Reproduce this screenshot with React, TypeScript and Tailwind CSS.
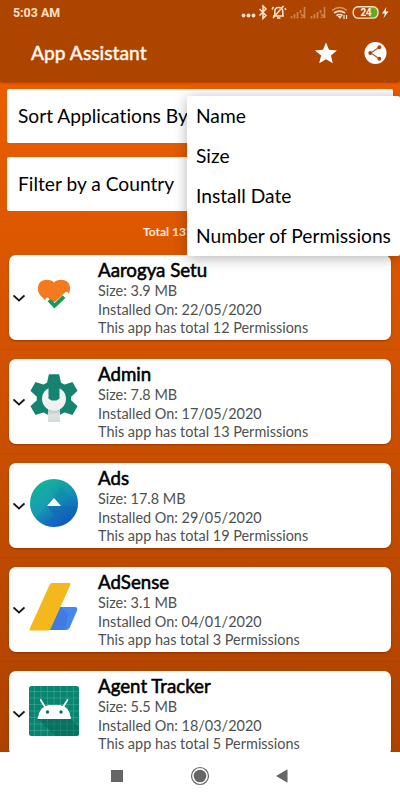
import React from "react";

type AppEntry = {
  name: string;
  size: string;
  date: string;
  permissions: number;
  icon: React.ReactNode;
};

const AarogyaIcon = () => (
  <svg viewBox="0 0 50 50" className="h-[50px] w-[50px]">
    <path d="M25 12.500C28 9 36 8.500 39.500 13C42 17 41.500 22 38.500 25L31 32H18L11.500 25.500C8.500 22 8 17 10.500 13C14 8.500 22 9 25 12.500Z" fill="#f47a20" />
    <path d="M18.300 29.500L25 35.200L37.500 23.500V37H16Z" fill="#fff" stroke="#fff" strokeWidth="3.500" strokeLinejoin="round" />
    <path d="M20 30L25.500 35.800L35 26.600" fill="none" stroke="#119b54" strokeWidth="3.800" />
  </svg>
);

const AdminIcon = () => (
  <svg viewBox="0 0 50 50" className="h-[50px] w-[50px]">
    <defs>
      <linearGradient id="handle" x1="0" y1="0" x2="0" y2="1">
        <stop offset="0" stopColor="#aeb4b4" />
        <stop offset="0.5" stopColor="#dfe3e3" />
        <stop offset="1" stopColor="#d5d9d9" />
      </linearGradient>
    </defs>
    <g fill="#15836f" stroke="#15836f" strokeWidth="1.500" strokeLinejoin="round">
      <circle cx="25" cy="24.500" r="16.500" />
      <path d="M20.500 1H29.500L31.500 10H18.500Z" />
      <path d="M20.500 1H29.500L31.500 10H18.500Z" transform="rotate(60 25 24.500)" />
      <path d="M20.500 1H29.500L31.500 10H18.500Z" transform="rotate(120 25 24.500)" />
      <path d="M20.500 1H29.500L31.500 10H18.500Z" transform="rotate(240 25 24.500)" />
      <path d="M20.500 1H29.500L31.500 10H18.500Z" transform="rotate(300 25 24.500)" />
    </g>
    <path d="M19 34H31V48H19Z" fill="url(#handle)" />
    <path d="M19.500 14.200A12 12 0 1 0 30.500 14.200V24.500L27.500 26.500H22.500L19.500 24.500Z" fill="#f0f2f2" />
  </svg>
);

const AdsIcon = () => (
  <svg viewBox="0 0 50 50" className="h-[50px] w-[50px]">
    <defs>
      <linearGradient id="ads-fill" x1="0.25" y1="0.1" x2="0.8" y2="0.95">
        <stop offset="0" stopColor="#12b39b" />
        <stop offset="0.5" stopColor="#168fb3" />
        <stop offset="1" stopColor="#104bc8" />
      </linearGradient>
      <clipPath id="ads-clip"><circle cx="25" cy="25" r="24" /></clipPath>
    </defs>
    <g clipPath="url(#ads-clip)">
      <rect width="50" height="50" fill="url(#ads-fill)" />
      <path d="M32 9L50 27V50L25 19Z" fill="#087eac" opacity="0.3" />
      <path d="M18 28H50V44L30 44Z" fill="#1063b2" opacity="0.5" />
      <path d="M0 26L19 8L25 18L5 42Z" fill="#22aeb0" opacity="0.3" />
      <path d="M23 39L30 44L25 50H14Z" fill="#1266cf" opacity="0.5" />
    </g>
    <path d="M25 20L32 28H18Z" fill="#fff" />
  </svg>
);

const AdSenseIcon = () => (
  <svg viewBox="0 0 50 50" className="h-[50px] w-[50px]">
    <path d="M30 25H46Q49 25 48 28.500L40.500 46Q39.500 48 37 48H19Z" fill="#4587ed" />
    <path d="M32 25L39 33L36 48H20Z" fill="#3f7be2" />
    <path d="M23 1H40.500Q42 1 41.200 3L22 46Q21 48.500 19 48.500H1.500Q0 48.500 1 46L20.500 3Q21.500 1 23 1Z" fill="#f4b81d" />
  </svg>
);

const TrackerIcon = () => (
  <svg viewBox="0 0 50 50" className="h-[50px] w-[50px]">
    <defs>
      <clipPath id="tracker-clip"><rect width="50" height="50" rx="2.500" /></clipPath>
    </defs>
    <g clipPath="url(#tracker-clip)">
      <rect width="50" height="50" fill="#07856f" />
      <path d="M5.500 0V50M12 0V50M18.500 0V50M25 0V50M31.500 0V50M38 0V50M44.500 0V50M0 5.500H50M0 12H50M0 18.500H50M0 25H50M0 31.500H50M0 38H50M0 44.500H50" stroke="#48a797" strokeWidth="0.600" />
      <path d="M9 33L26 50H50V41L41 32Z" fill="#075e50" opacity="0.45" />
    </g>
    <path d="M8.500 33Q10 20.500 20 19H31Q41 20.500 42 33Z" fill="#fff" />
    <path d="M16 21L11.700 14M34 21L38.500 14" stroke="#fff" strokeWidth="1.700" strokeLinecap="round" />
    <circle cx="18.500" cy="26" r="1.700" fill="#08745f" />
    <circle cx="32" cy="26" r="1.700" fill="#08745f" />
  </svg>
);

const apps: AppEntry[] = [
  { name: "Aarogya Setu", size: "3.9 MB", date: "22/05/2020", permissions: 12, icon: <AarogyaIcon /> },
  { name: "Admin", size: "7.8 MB", date: "17/05/2020", permissions: 13, icon: <AdminIcon /> },
  { name: "Ads", size: "17.8 MB", date: "29/05/2020", permissions: 19, icon: <AdsIcon /> },
  { name: "AdSense", size: "3.1 MB", date: "04/01/2020", permissions: 3, icon: <AdSenseIcon /> },
  { name: "Agent Tracker", size: "5.5 MB", date: "18/03/2020", permissions: 5, icon: <TrackerIcon /> },
];

const StatusIcons = () => (
  <svg viewBox="0 0 150 22" className="h-[22px] w-[150px]" fill="none" stroke="#ffe4cd">
    <g fill="#ffe4cd" stroke="none">
      <circle cx="4.500" cy="13.500" r="1.900" />
      <circle cx="9.500" cy="13.500" r="1.900" />
      <circle cx="14.500" cy="13.500" r="1.900" />
    </g>
    <path d="M20.500 7L27 13.500L24 16.500V4L27 7L20.500 13.500" strokeWidth="1.500" />
    <path d="M34 14H45M35.800 14V9.500Q35.800 5.500 39.800 5.500Q43.800 5.500 43.800 9.500V13.500M38 16H41.500M44.500 4L34 16M34.500 5L33 7.500M46 6L46.800 8" strokeWidth="1.500" />
    <g opacity="0.4">
      <path d="M52.500 14V16.500M55.500 12V16.500M58.500 10V16.500M61.500 8V11M65.500 5V16M62 12L66 16M66 12L62 16" strokeWidth="1.700" />
      <path d="M72.500 14V16.500M75.500 12V16.500M78.500 10V16.500M81.500 8V11M85.500 5V16M82 12L86 16M86 12L82 16" strokeWidth="1.700" />
    </g>
    <path d="M93 8.500Q100.500 2.500 108 8.500" strokeWidth="1.500" opacity="0.5" />
    <path d="M95 11Q100.500 7.200 106 11M97.500 13.500Q100.500 11.500 103.500 13.500" strokeWidth="1.600" />
    <path d="M98.500 14L101 17L103 14Z" fill="#ffe4cd" stroke="none" />
    <path d="M105 13V17M107.500 13V17" strokeWidth="1.200" />
    <path d="M131 5H134Q138.500 5 138.500 10.500Q138.500 16 134 16H131Z" fill="#62a829" stroke="none" />
    <rect x="114.200" y="4.800" width="24.800" height="11.300" rx="5" strokeWidth="1.400" />
    <text x="121.500" y="14.300" fill="#fff1e4" stroke="none" className="text-[10px] font-bold [font-family:Roboto,sans-serif]" textLength="11">24</text>
    <path d="M147.500 5L143 11.500H146L144.500 16L149.500 9.500H146.500Z" fill="#fff" stroke="none" />
  </svg>
);

function Header() {
  return (
    <header className="relative z-10 h-[81px] shrink-0 bg-[#ad4400] shadow-[0_1px_3px_rgba(70,20,0,0.65)]">
      <div className="flex h-6 items-start justify-between pl-[13px] pr-[11px] pt-[2px]">
        <span className="text-[12.4px] font-bold leading-[22px] text-[#ffe0c5] [font-family:Roboto,sans-serif]">5:03 AM</span>
        <StatusIcons />
      </div>
      <div className="flex h-[57px] items-center pl-[31px] pr-[13px]">
        <h1 className="flex-1 text-[19.2px] font-medium leading-6 text-[#fff7ed] [-webkit-text-stroke:0.350px_#fff7ed]">App Assistant</h1>
        <svg viewBox="0 0 24 24" className="mr-[26px] h-6 w-6" fill="white">
          <path d="M12 1.500L15 8.800L23 9.400L16.900 14.500L18.800 22.300L12 18.200L5.200 22.300L7.100 14.500L1 9.400L9 8.800Z" />
        </svg>
        <svg viewBox="0 0 24 24" className="h-6 w-[23px]">
          <circle cx="12" cy="12" r="11.500" fill="#fff" />
          <path d="M16 6L7 12L16 18" fill="none" stroke="#ad5b32" strokeWidth="1.200" />
          <g fill="#ad4400"><circle cx="16" cy="6" r="2" /><circle cx="6.500" cy="12" r="2" /><circle cx="16" cy="18" r="2" /></g>
        </svg>
      </div>
    </header>
  );
}

function AppRow({ app }: { app: AppEntry }) {
  return (
    <article className="h-[104px] shrink-0 border-b border-[#9b3600]/20 px-[9px] pt-[9px]">
      <div className="flex h-[85px] rounded-[7px] bg-white pl-1 shadow-[0_1px_2px_rgba(80,20,0,0.4)]">
        <svg viewBox="0 0 12 8" className="mt-[39px] h-2 w-3 shrink-0" fill="none">
          <path d="M0.500 1.500L6 6.500L11.500 1.500" stroke="#141414" strokeWidth="1.700" />
        </svg>
        <div className="ml-1 mt-[15px] h-[50px] w-[50px] shrink-0">{app.icon}</div>
        <div className="ml-[19px] whitespace-nowrap text-[14.45px] leading-[18.6px] text-[#505050]">
          <h2 className="mt-1 text-[18.7px] leading-[23px] text-black [-webkit-text-stroke:0.550px_black]">{app.name}</h2>
          <p>Size: {app.size}</p>
          <p>Installed On: {app.date}</p>
          <p>This app has total {app.permissions} Permissions</p>
        </div>
      </div>
    </article>
  );
}

export default function App() {
  return (
    <div className="relative flex h-[800px] w-[400px] flex-col overflow-hidden bg-white [font-family:Lato,sans-serif] [font-variant-ligatures:none]">
      <Header />
      <main className="flex h-[671px] shrink-0 flex-col overflow-hidden bg-gradient-to-b from-[#eb5e00] to-[#ad4200]">
        <div className="flex flex-col gap-[14px] px-[7px] pt-2 text-[19.2px] text-black">
          <div className="flex h-[54px] items-center rounded-[2px] bg-white pl-[11px] pt-px">Sort Applications By</div>
          <div className="flex h-[54px] items-center rounded-[2px] bg-white pl-[11px] pt-px">Filter by a Country</div>
        </div>
        <p className="h-[35px] shrink-0 pl-[143px] pt-[12px] text-[12px] font-bold leading-[18px] text-[#ffeada]">Total 137</p>
        <section className="flex flex-col">
          {apps.map((app) => <AppRow key={app.name} app={app} />)}
        </section>
      </main>
      <nav className="flex h-12 shrink-0 items-center bg-white">
        <svg viewBox="0 0 400 48" className="h-12 w-[400px]" fill="#666">
          <rect x="111" y="18" width="12" height="12" />
          <circle cx="200" cy="24" r="8.500" fill="none" stroke="#666" strokeWidth="1.200" />
          <circle cx="200" cy="24" r="6.300" />
          <path d="M276 24L287.500 17.200V30.800Z" />
        </svg>
      </nav>
      <div className="absolute left-[187px] top-[96px] z-20 flex h-[160px] w-[213px] flex-col rounded-[2px] bg-white pl-[9px] text-[19.2px] leading-10 text-black shadow-[0_2px_14px_rgba(0,0,0,0.3)]">
        <span>Name</span>
        <span>Size</span>
        <span>Install Date</span>
        <span className="whitespace-nowrap">Number of Permissions</span>
      </div>
    </div>
  );
}
